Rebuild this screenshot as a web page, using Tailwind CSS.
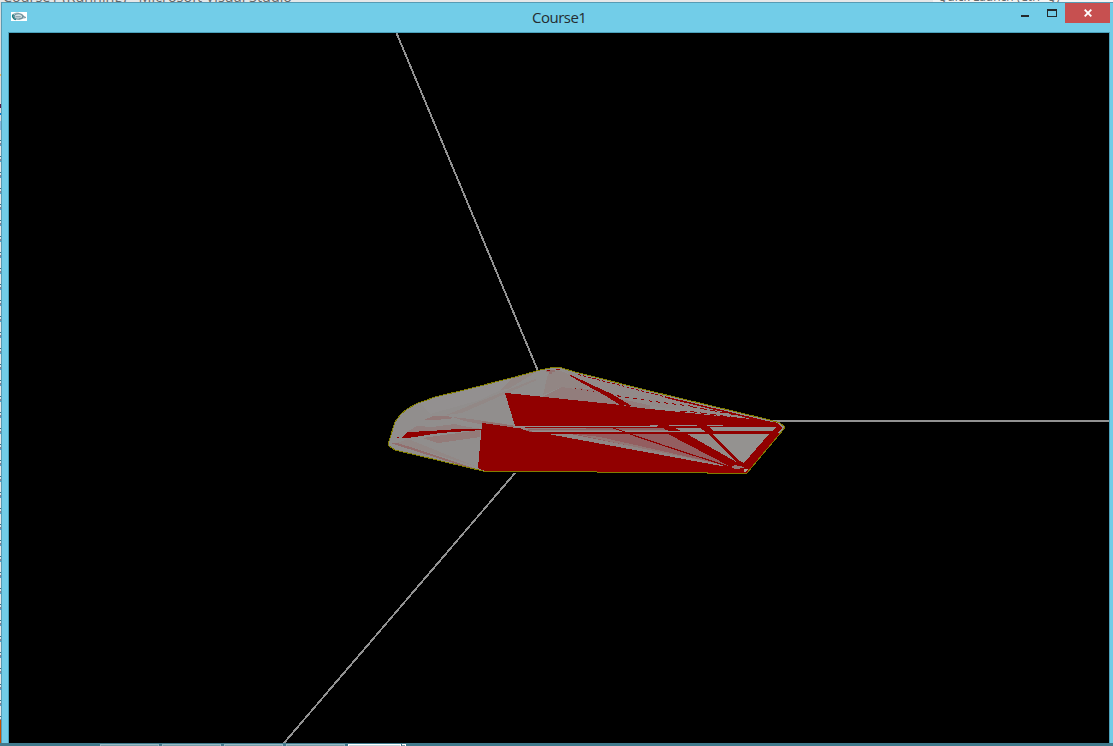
<!DOCTYPE html>
<html lang="en">
<head>
<meta charset="utf-8">
<title>Course1</title>
<script src="https://cdn.jsdelivr.net/npm/@tailwindcss/browser@4"></script>
</head>
<body class="h-screen w-screen overflow-hidden bg-[#e6e7e8] font-['Open_Sans',sans-serif]">
<div class="relative flex h-[746px] w-[1113px] flex-col overflow-hidden">
  <!-- strip of the window behind -->
  <div class="relative flex h-[2px] shrink-0 justify-between overflow-hidden bg-[#e6e7e8] leading-[18px] text-[#686868]">
    <span class="-mt-[12px] ml-[3px] w-[290px] whitespace-nowrap text-[14.4px]">Course1 (Running) - Microsoft Visual Studio</span>
    <span class="-mt-[12px] w-[180px] whitespace-nowrap bg-[#f5f5f5] pl-[5px] text-[12px]">Quick Launch (Ctrl+Q)</span>
  </div>
  <div class="flex min-h-0 flex-1">
    <!-- left sliver of the window behind -->
    <div class="flex w-px shrink-0 flex-col bg-[#dcdcdc]">
      <div class="h-[72px]"></div>
      <div class="h-0.5 bg-[#f0b860]"></div>
      <div class="h-[28px]"></div>
      <div class="h-[4px] bg-[#5a1745]"></div>
      <div class="h-[5px]"></div>
      <div class="h-0.5 bg-[#0078d0]"></div>
      <div class="mt-[6px] h-[9px] bg-[#88b6dc]"></div>
      <div class="mt-[10px] flex-1 bg-[repeating-linear-gradient(to_bottom,#397587_0_1px,#e6e6e6_1px_3px,#8a8294_3px_5px,#48a8d0_5px_6px,#e6e6e6_6px_16px)]"></div>
      <div class="h-[26px] bg-[#ca5100]"></div>
    </div>
    <!-- Course1 window -->
    <div class="flex flex-1 flex-col border-l border-t border-[#579bb4] bg-[#72cde8]">
      <div class="flex h-[29px] shrink-0 items-start">
        <svg class="ml-[9px] mt-[9px] h-[9px] w-4 shrink-0" viewBox="0 0 16 9">
          <rect width="16" height="9" fill="#fff"/>
          <path d="M8.5 1.500C5 .4 1.300 2 1.300 4.400" fill="none" stroke="#7fa3ac"/>
          <path d="M2.500 2.500Q.8 4.500 3.200 6.700L5 7.500" fill="none" stroke="#16777b" stroke-width="1.600"/>
          <ellipse cx="7.500" cy="4.400" rx="4.200" ry="2.700" fill="#d5e2e5" stroke="#688f9c" stroke-width="1.100"/>
          <path d="M4.500 4.800h5.200M9.500 2.300l3.600 2M8 7l3-1 3.500-.3M12 4.300l3 1.200" fill="none" stroke="#78939d"/>
        </svg>
        <div class="ml-[505px] mt-[4px] w-[55px] whitespace-nowrap text-[15px] leading-[21px] tracking-[-0.5px] text-[#242c30]">Course1</div>
        <svg class="ml-[434px] mt-[6px] h-[9px] w-[37px] shrink-0" viewBox="1021 9 37 9" shape-rendering="crispEdges">
          <path d="M1021 15h8v2h-8zM1047 9h10v8h-10zM1048 11v5h8v-5z" fill="#24292b" fill-rule="evenodd"/>
        </svg>
        <div class="ml-[7px] flex h-5 w-[45px] items-center justify-center bg-[#c75050]">
          <svg class="h-2 w-2" viewBox="0 0 8 8"><path d="M.7.7l6.6 6.6M7.3.7L.7 7.3" stroke="#fff" stroke-width="1.900"/></svg>
        </div>
      </div>
      <div class="ml-1.5 h-[711px] w-[1102px] shrink-0 border-l border-t border-[#4ba1bb] bg-[#4ba1bb]">
      <svg class="block h-[710px] w-[1100px] bg-black" viewBox="9 33 1100 710" shape-rendering="crispEdges">
        <g stroke="#929292" stroke-width="1.900" fill="none">
          <path d="M396.500 33L538 371M515 473L284 743M770 421H1109"/>
        </g>
        <defs>
          <path id="hull" d="M388.500 443L390 438 395 422 400 415 407 409 417 403.500 435 397 468 389 515 377 540 370 553 367.500 562 368 575 372 650 391 770 420 780 423 785 427 783 430 747 473 707 473 707 472.500 485 471.500 466 467 395 450 389 446Z"/>
          <clipPath id="inside"><use href="#hull"/></clipPath>
        </defs>
        <use href="#hull" fill="#918e8d"/>
        <g clip-path="url(#inside)">
          <!-- translucent facets -->
          <path d="M419 401L540 371 480 400 430 414Z" fill="#939090"/>
          <path d="M446 415L535 379 537 380 462 413Z" fill="#928886"/>
          <path d="M407 432L417 426 432 427 455 424 468 427 482 429Z" fill="#92807f"/>
          <path d="M424 420L433 416 448 416 453 418 448 419 434 420Z" fill="#927978"/>
          <path d="M453 417L470 419 505 424 480 424 464 421Z" fill="#92807f"/>
          <path d="M482 421l22 3 12 2v2l-34-5z" fill="#92716f"/>
          <path d="M390 443L398 443 480 470 466 467Z" fill="#936e6d"/>
          <path d="M397 443L408 439 475 466Z" fill="#928886"/>
          <path d="M422 438L480 430 480 437 438 443Z" fill="#937b79"/>
          <path d="M562 387L604 390 650 402 650 409 542 397 554 391Z" fill="#927d7c"/>
          <path d="M548 374L558 370 600 386 575 389 562 387 552 391 543 395Z" fill="#928684"/>
          <path d="M562 370L650 393 760 420 658 407 612 397Z" fill="#928a89"/>
          <path d="M514 377L540 370 508 389 500 390Z" fill="#928785"/>
          <path d="M546 370h9v2h-3v2h-3v-2h-3z" fill="#927271"/>
          <!-- opaque red faces -->
          <g fill="#910000">
            <path d="M505 393L516 394 621 405 640 408 690 413 775 422 785 427 747 473 486 471.500 478 468 482 423 518 428 515 426Z"/>
            <path d="M402 438L407 432 430 431 465 428.500 482 429 482 430 440 433 405 438.500Z"/>
            <path d="M568 374.500L571 375 592 385 612 394 632 406 620 405 606 396 584 384Z"/>
          </g>
          <!-- gaps between the faces -->
          <path d="M514 426h143v1h-143z" fill="#929090"/>
          <path d="M520 428H663L668 432H530L522 429Z" fill="#8f6465"/>
          <path d="M526 428h60v1h-60zM530 430h138v1h-138z" fill="#93807f"/>
          <path d="M588 427h60v1h-60z" fill="#910000"/>
          <path d="M513 427h11l5 3h-5l-4-2h-7z" fill="#958584"/>
          <path d="M532 431H705v1h-173zM669 425h28v1h-28zM707 425h16v1h-16zM650 425h8v1h-8z" fill="#939090"/>
          <path d="M548 434H668L731 467 724 466Z" fill="#935e60"/>
          <path d="M548 434L570 434 640 448 729 466 724 466.500 640 451Z" fill="#918685"/>
          <path d="M575 434L600 437 724 465 640 448Z" fill="#937775"/>
          <path d="M610 427L625 432M630 434L665 446 730 467" fill="none" stroke="#910000" stroke-width="1.200"/>
          <path d="M532 432h250v2h-250z" fill="#910000"/>
          <path d="M675 428h25l5 3h-24zM709 427h67l-3 4h-60z" fill="#92908f"/>
          <path d="M687 434H708L738 463Z" fill="#928a88"/>
          <path d="M712 434H769L744 463 740 461Z" fill="#949290"/>
          <path d="M731 467l4-2 9 2v1l-9 1z" fill="#927776"/>
          <path d="M779 424L785 427 783 430 779 434 778 432 782 428Z" fill="#94908e"/>
          <path d="M744 469h4l-3 3h-1z" fill="#aaa5a0"/>
          <!-- depth-fighting stitches -->
          <g fill="none" stroke="#910000">
            <path d="M578 374.500L650 393 765 422" stroke-dasharray="3 2"/>
            <path d="M665 397L768 422" stroke-width="1.500"/>
            <path d="M575 388.500L600 392" stroke-dasharray="1 5"/>
            <path d="M609 394.500L650 401 690 406" stroke-dasharray="4 4"/>
            <path d="M690 406.500L742 416M690 411.500L768 422" stroke-dasharray="7 3"/>
            <path d="M680 411.500h7M683 413.500h6M547 370.500h3M556 369.500h4"/>
            <path d="M397 437.500h2"/>
          </g>
        </g>
        <use href="#hull" fill="none" stroke="#807c00" stroke-width="1"/>
      </svg>
      </div>
    </div>
  </div>
  <!-- taskbar edge, translucent over the window -->
  <div class="absolute inset-x-0 bottom-0 flex h-[3px] items-end gap-[3px] bg-[#417b8d] pl-[100px]">
    <div class="h-0.5 w-[59px] border-x border-t border-[#96bac4] bg-[#789fa9]"></div>
    <div class="h-0.5 w-[59px] border-x border-t border-[#96bac4] bg-[#789fa9]"></div>
    <div class="h-0.5 w-[59px] border-x border-t border-[#96bac4] bg-[#789fa9]"></div>
    <div class="h-0.5 w-[59px] border-x border-t border-[#96bac4] bg-[#789fa9]"></div>
    <div class="flex h-0.5 gap-px">
      <div class="w-[53px] border-x border-t border-white bg-[#c4d5da]"></div>
      <div class="w-[4px] border-r border-t border-white bg-[#7ba2ad]"></div>
    </div>
  </div>
</div>
</body>
</html>
